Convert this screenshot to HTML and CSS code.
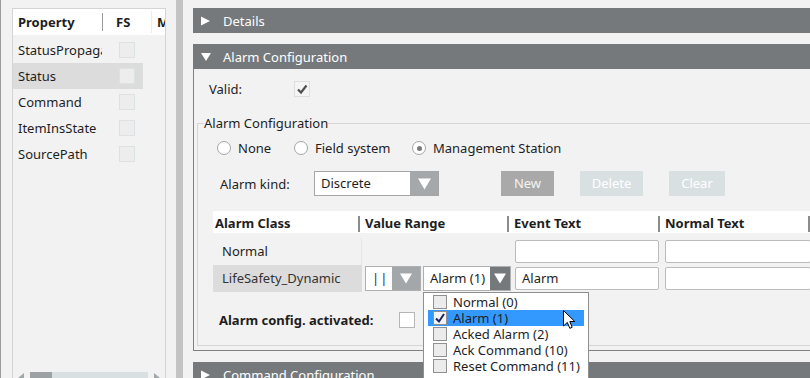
FILE: index.html
```html
<!DOCTYPE html>
<html>
<head>
<meta charset="utf-8">
<link rel="stylesheet" href="styles.css">
</head>
<body>
<div class="app">
  <aside class="left">
    <div class="pgrid">
      <div class="pg-head">
        <div class="pg-h h-name">Property</div>
        <i class="hsep"></i>
        <div class="pg-h h-fs">FS</div>
        <i class="hsep faint"></i>
        <div class="pg-h h-m">M</div>
      </div>
      <div class="pg-rows">
        <div class="pg-row"><span class="pg-name">StatusPropagation</span><span class="pcb"></span></div>
        <div class="pg-row sel"><span class="pg-name">Status</span><span class="pcb"></span></div>
        <div class="pg-row"><span class="pg-name">Command</span><span class="pcb"></span></div>
        <div class="pg-row"><span class="pg-name">ItemInsState</span><span class="pcb"></span></div>
        <div class="pg-row"><span class="pg-name">SourcePath</span><span class="pcb"></span></div>
      </div>
      <div class="hscroll">
        <svg class="sarr" width="6" height="10" viewBox="0 0 6 10"><path d="M6 0 L0 5 L6 10 Z" fill="#a2a7a9"/></svg>
        <span class="thumb"></span>
        <span class="track"></span>
        <svg class="sarr" width="6" height="10" viewBox="0 0 6 10"><path d="M0 0 L6 5 L0 10 Z" fill="#a2a7a9"/></svg>
      </div>
    </div>
  </aside>
  <div class="splitter"></div>
  <main class="right">
    <div class="bar">
      <svg class="bar-tri" width="10" height="10" viewBox="0 0 10 10"><path d="M0 0.5 L9 5 L0 9.5 Z" fill="#fff"/></svg>
      <span>Details</span>
    </div>
    <div class="bar bar-gap">
      <svg class="bar-tri" width="10" height="10" viewBox="0 0 10 10"><path d="M0 1 L10 1 L5 9 Z" fill="#fff"/></svg>
      <span>Alarm Configuration</span>
    </div>
    <div class="panel">
      <div class="valid-row">
        <span class="valid-lbl">Valid:</span>
        <span class="vcb"><svg width="14" height="14" viewBox="0 0 14 14"><path d="M3 7.5 L6 10.5 L11.5 3.5" fill="none" stroke="#505050" stroke-width="2.2"/></svg></span>
      </div>
      <fieldset class="group">
        <legend>Alarm Configuration</legend>
        <div class="radios">
          <label class="radio r-none"><span class="rc"></span><span>None</span></label>
          <label class="radio r-field"><span class="rc"></span><span>Field system</span></label>
          <label class="radio"><span class="rc on"></span><span>Management Station</span></label>
        </div>
        <div class="kind-row">
          <span class="kind-lbl">Alarm kind:</span>
          <div class="dd">
            <span class="dd-text">Discrete</span>
            <span class="dd-btn"><svg width="13" height="12" viewBox="0 0 13 12"><path d="M0 0.5 L13 0.5 L6.5 11.5 Z" fill="#fff"/></svg></span>
          </div>
          <span class="btn btn-new">New</span>
          <span class="btn btn-off btn-del">Delete</span>
          <span class="btn btn-off btn-clr">Clear</span>
        </div>
        <div class="tbl">
          <div class="tr thead">
            <div class="th c1"><span>Alarm Class</span><i class="tsep"></i></div>
            <div class="th"><span>Value Range</span><i class="tsep"></i></div>
            <div class="th"><span>Event Text</span><i class="tsep"></i></div>
            <div class="th"><span>Normal Text</span><i class="tsep"></i></div>
          </div>
          <div class="tr trow r1">
            <div class="td c1 bline">Normal</div>
            <div class="td"></div>
            <div class="td"><div class="inp inp-ev"></div></div>
            <div class="td"><div class="inp inp-nt"></div></div>
          </div>
          <div class="tr trow">
            <div class="td c1 hl">LifeSafety_Dynamic</div>
            <div class="td">
              <div class="combo c-a">
                <span class="combo-text bars">||</span>
                <span class="combo-btn light"><svg width="12" height="11" viewBox="0 0 12 11"><path d="M0 0.5 L12 0.5 L6 10.5 Z" fill="#fff"/></svg></span>
              </div>
              <div class="combo c-b">
                <span class="combo-text">Alarm (1)</span>
                <span class="combo-btn dark"><svg width="12" height="11" viewBox="0 0 12 11"><path d="M0 0.5 L12 0.5 L6 10.5 Z" fill="#fff"/></svg></span>
                <div class="popup">
                  <div class="pi"><span class="picb"></span><span>Normal (0)</span></div>
                  <div class="pi pi-sel"><span class="picb"><svg width="12" height="12" viewBox="0 0 12 12"><path d="M2 6.5 L5 9.5 L10 2" fill="none" stroke="#1c2466" stroke-width="2"/></svg></span><span>Alarm (1)</span>
                    <svg class="cursor" width="14" height="20" viewBox="0 0 14 20"><path d="M0.5 0.5 L0.5 16 L4.3 12.4 L6.8 18.3 L9.2 17.3 L6.8 11.5 L11.8 11.5 Z" fill="#fff" stroke="#000" stroke-width="1" stroke-linejoin="round"/></svg>
                  </div>
                  <div class="pi"><span class="picb"></span><span>Acked Alarm (2)</span></div>
                  <div class="pi"><span class="picb"></span><span>Ack Command (10)</span></div>
                  <div class="pi"><span class="picb"></span><span>Reset Command (11)</span></div>
                </div>
              </div>
            </div>
            <div class="td"><div class="inp inp-ev">Alarm</div></div>
            <div class="td"><div class="inp inp-nt"></div></div>
          </div>
        </div>
        <div class="act-row">
          <span class="act-lbl">Alarm config. activated:</span>
          <span class="acb"></span>
        </div>
      </fieldset>
    </div>
    <div class="bar bar-gap">
      <svg class="bar-tri" width="10" height="10" viewBox="0 0 10 10"><path d="M0 0.5 L9 5 L0 9.5 Z" fill="#fff"/></svg>
      <span>Command Configuration</span>
    </div>
  </main>
</div>
</body>
</html>
```

FILE: styles.css
```css
* { box-sizing: border-box; }
html, body { margin: 0; padding: 0; height: 378px; overflow: hidden; }
body {
  background: #f2f2f2;
  font-family: "Noto Sans", "Open Sans", sans-serif;
  font-size: 13px;
  line-height: 18px;
  color: #1e1e1e;
}
.app { display: flex; height: 378px; overflow: hidden; }

/* ---------- left property grid ---------- */
.left {
  flex: none;
  width: 176px;
  border-left: 1px solid #9c9c9c;
  padding: 8px 10px 0 11px;
}
.pgrid {
  width: 154px;
  height: 381px;
  border: 1px solid #d4d4d4;
  display: flex;
  flex-direction: column;
  overflow: hidden;
}
.pg-head { flex: none; display: flex; height: 26px; background: #fff; }
.pg-h { font-weight: 700; line-height: 26px; white-space: nowrap; overflow: hidden; }
.h-name { width: 89px; padding-left: 5px; }
.h-fs { width: 48px; padding-left: 13px; }
.h-m { flex: 1; padding-left: 5px; }
.hsep { flex: none; width: 1px; height: 18px; align-self: center; background: #9a9a9a; }
.hsep.faint { background: #ececec; height: 22px; }
.pg-rows { margin-top: 2px; }
.pg-row { display: flex; align-items: center; width: 130px; height: 26px; }
.pg-row.sel { background: #dcdcdc; }
.pg-name { width: 89px; padding-left: 5px; white-space: nowrap; overflow: hidden; }
.pcb {
  width: 16px; height: 16px; margin-left: 17px;
  background: #ededed; border: 1px solid #dce2e3;
}
.hscroll { margin-top: auto; flex: none; height: 16px; display: flex; align-items: flex-start; padding-left: 5px; }
.sarr { margin-top: 1px; flex: none; }
.thumb { width: 22px; height: 16px; margin-left: 6px; background: #9ca1a3; }
.track { width: 96px; height: 16px; background: #d9e0e1; margin-right: 6px; }

.splitter { flex: none; width: 7px; background: #c3c3c3; }

/* ---------- right ---------- */
.right { flex: none; width: 680px; padding: 8px 0 0 10px; }
.bar {
  height: 25px;
  background: #75797b;
  color: #fff;
  display: flex;
  align-items: center;
  padding-left: 8px;
}
.bar-tri { flex: none; margin-right: 12px; }
.bar-gap { margin-top: 11px; }

.panel {
  border-left: 1px solid #808080;
  border-bottom: 1px solid #808080;
  padding: 11px 0 4px 0;
}
.valid-row { display: flex; align-items: center; height: 18px; padding-left: 15px; }
.valid-lbl { width: 85px; }
.vcb {
  width: 16px; height: 16px;
  background: #f4f4f4; border: 1px solid #dedede;
  display: flex; align-items: center; justify-content: center;
}

.group {
  margin: 16px 0 0 3px;
  padding: 7px 0 16px 6px;
  border: 1px solid #d5d5d5;
  width: 640px;
  min-width: 0;
}
.group legend { padding: 0; margin-left: 0; line-height: 18px; }

.radios { display: flex; height: 18px; align-items: center; margin-left: 13px; }
.radio { display: flex; align-items: center; }
.r-none { width: 77px; }
.r-field { width: 118px; }
.rc {
  width: 14px; height: 14px; border-radius: 50%;
  border: 1px solid #a6a6a6; background: #fff;
  margin-right: 7px;
  display: flex; align-items: center; justify-content: center;
}
.rc.on::after { content: ""; width: 5px; height: 5px; border-radius: 50%; background: #7a7a7a; }

.kind-row { display: flex; align-items: center; height: 25px; margin-top: 14px; margin-left: 16px; }
.kind-lbl { width: 94px; }
.dd {
  width: 125px; height: 25px;
  border: 1px solid #a5a5a5; background: #fff;
  display: flex; align-items: stretch;
}
.dd-text { flex: 1; padding-left: 6px; line-height: 22px; }
.dd-btn { width: 28px; background: #a5a8aa; display: flex; align-items: center; justify-content: center; }
.btn {
  height: 25px; line-height: 24px; text-align: center;
  color: #f4f4f4;
}
.btn-new { width: 53px; margin-left: 62px; background: #a9a9a9; }
.btn-off { background: #d9e0e2; color: #fff; margin-left: 26px; }
.btn-del { width: 63px; }
.btn-clr { width: 56px; }

.tbl { margin-left: 9px; margin-top: 15px; width: 620px; }
.tr { display: grid; grid-template-columns: 149px 149px 151px 150px; }
.thead { background: #fff; height: 22px; margin-bottom: 5px; }
.th {
  display: flex; justify-content: space-between;
  font-weight: 700; line-height: 19px; padding: 3px 0 0 3px;
  white-space: nowrap;
}
.th.c1 { padding-left: 2px; }
.tsep { flex: none; width: 2px; height: 16px; align-self: flex-end; margin: 0 2px 1px 0; background: #8c8c8c; }
.trow { height: 27px; }
.td { display: flex; align-items: center; white-space: nowrap; }
.td.c1 { padding-left: 9px; padding-bottom: 1px; }
.bline { border-right: 1px solid #e6e6e6; }
.hl { background: #dcdcdc; color: #333; }
.inp {
  height: 23px;
  border: 1px solid #bcbcbc;
  border-radius: 2px;
  background: #fff;
  padding-left: 6px;
  line-height: 20px;
}
.inp-ev { width: 144px; margin-left: 4px; }
.inp-nt { width: 146px; margin-left: 3px; }

.combo {
  height: 25px; border: 1px solid #b0b0b0; background: #fff;
  display: flex; align-items: stretch; position: relative;
}
.c-a { width: 56px; margin-left: 3px; }
.c-b { width: 88px; margin-left: 2px; }
.combo-text { flex: 1; padding-left: 6px; line-height: 22px; }
.bars { letter-spacing: 1px; color: #24325a; }
.combo-btn { width: 28px; display: flex; align-items: center; justify-content: center; }
.c-b .combo-btn { width: 20px; }
.combo-btn.light { background: #a4a7a9; }
.combo-btn.dark { background: #75797b; }

.popup {
  position: absolute;
  left: -1px;
  top: 25px;
  width: 166px;
  height: 90px;
  background: #fff;
  border: 1px solid #8f8f8f;
  padding-top: 1px;
  z-index: 5;
}
.pi { position: relative; display: flex; align-items: center; height: 16px; margin: 0 4px; padding-left: 5px; }
.pi-sel { background: #3399ff; }
.picb {
  flex: none;
  width: 14px; height: 14px; margin-right: 6px;
  border: 1px solid #909090; background: #ececec;
  display: flex; align-items: center; justify-content: center;
}
.pi-sel .picb { background: #f4f4f4; }
.cursor { position: absolute; left: 135px; top: 0px; }

.act-row { display: flex; align-items: center; height: 18px; margin-top: 19px; margin-left: 15px; }
.act-lbl { width: 180px; font-weight: 700; }
.acb { width: 16px; height: 16px; background: #fff; border: 1px solid #b5b5b5; }
```
